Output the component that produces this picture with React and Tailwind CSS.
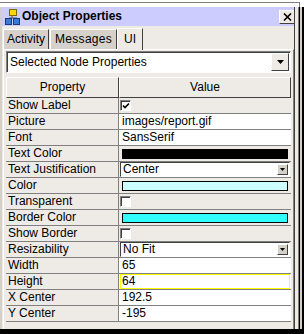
import React from "react";

const rows = [
  { p: "Show Label", t: "check", on: true },
  { p: "Picture", t: "text", v: "images/report.gif" },
  { p: "Font", t: "text", v: "SansSerif" },
  { p: "Text Color", t: "color", c: "bg-black" },
  { p: "Text Justification", t: "combo", v: "Center" },
  { p: "Color", t: "color", c: "bg-[#ccffff]" },
  { p: "Transparent", t: "check", on: false },
  { p: "Border Color", t: "color", c: "bg-[#33ffff]" },
  { p: "Show Border", t: "check", on: false },
  { p: "Resizability", t: "combo", v: "No Fit" },
  { p: "Width", t: "text", v: "65" },
  { p: "Height", t: "edit", v: "64" },
  { p: "X Center", t: "text", v: "192.5" },
  { p: "Y Center", t: "text", v: "-195" },
];

function SmallArrow() {
  return (
    <svg width="5" height="3" viewBox="0 0 5 3">
      <path d="M0 0H5L2.5 3Z" fill="#000" />
    </svg>
  );
}

function Value({ r }) {
  if (r.t === "check") {
    return (
      <div className="flex-1 bg-[#eeeae5] flex items-center pl-[1px]">
        <div className="w-[11px] h-[11px] bg-white border-t border-l border-[#808080] border-r border-b border-r-[#ffffff] border-b-[#ffffff] shadow-[inset_1px_1px_0_#404040] flex items-center justify-center">
          {r.on && (
            <svg width="8" height="8" viewBox="0 0 8 8">
              <path d="M1 3.5L3 5.5L7 1.5" stroke="#000" strokeWidth="1.6" fill="none" />
            </svg>
          )}
        </div>
      </div>
    );
  }
  if (r.t === "color") {
    return (
      <div className="flex-1 bg-[#eeeae5] flex items-center pl-[3px] pr-[3px]">
        <div className={`w-full h-[10px] border border-black ${r.c}`} />
      </div>
    );
  }
  if (r.t === "combo") {
    return (
      <div className="flex-1 bg-[#eeeae5] flex items-stretch pl-[1px] pr-[1px]">
        <div className="flex-1 bg-white border-t border-l border-[#404040] border-r border-b border-r-[#ffffff] border-b-[#ffffff] flex items-center pr-[1px]">
          <span className="flex-1 pl-[2px] leading-[13px]">{r.v}</span>
          <div className="w-[11px] h-[11px] bg-[#d4d0c8] border-t border-l border-white border-r border-b border-r-[#404040] border-b-[#404040] flex items-center justify-center">
            <SmallArrow />
          </div>
        </div>
      </div>
    );
  }
  if (r.t === "edit") {
    return (
      <div className="flex-1 bg-white flex items-stretch pl-[1px] pr-[1px]">
        <div className="flex-1 border border-[#ffff00] flex items-center pl-[1px]">{r.v}</div>
      </div>
    );
  }
  return <div className="flex-1 bg-white flex items-center pl-[3px]">{r.v}</div>;
}

export default function App() {
  return (
    <div className="w-[304px] h-[334px] bg-white overflow-hidden flex flex-col font-['Liberation_Sans',Arial,sans-serif] text-[12px] text-black leading-[15px]">
      <div className="h-[2px] bg-white" />
      <div className="h-[1px] w-[300px] bg-[#808080]" />
      <div className="h-[4px] w-[300px] bg-white border-r border-[#808080]" />
      <div className="flex flex-1 min-h-0">
        <div className="w-[294px] flex flex-col border-l-2 border-[#d4d0c8]">
          {/* title bar */}
          <div className="h-[19px] bg-[#ccccff] flex items-center pl-[3px] w-[296px]">
            <svg width="16" height="16" viewBox="0 0 16 16" className="shrink-0">
              <path d="M7 6V9M4 9H12M4 9V10M12 9V10" stroke="#555" strokeWidth="1" fill="none" />
              <rect x="4.5" y="0.5" width="7" height="6" fill="#f8d800" stroke="#7a6a00" />
              <rect x="0.5" y="9.5" width="6" height="6" fill="#3a7bd5" stroke="#1a3a7a" />
              <rect x="8.5" y="9.5" width="6" height="6" fill="#3a7bd5" stroke="#1a3a7a" />
            </svg>
            <span className="font-bold ml-[1px] flex-1 text-[12px]">Object Properties</span>
            <div className="w-[16px] h-[14px] bg-[#eeeae5] border-t border-l border-white border-r border-b border-r-[#404040] border-b-[#404040] flex items-center justify-center mr-[3px]">
              <svg width="9" height="8" viewBox="0 0 9 8">
                <path d="M1 0.5L8 7.5M8 0.5L1 7.5" stroke="#000" strokeWidth="1.6" />
              </svg>
            </div>
          </div>
          {/* body */}
          <div className="flex-1 bg-[#eeeae5] flex flex-col">
            <div className="h-[23px] flex items-end pl-[1px] pt-[1px]">
              <div className="h-[20px] bg-[#d6d2cb] border-t border-l border-white border-r border-r-[#404040] px-[3px] flex items-center mr-[1px]">Activity</div>
              <div className="h-[20px] bg-[#d6d2cb] border-t border-l border-white border-r border-r-[#404040] px-[4px] flex items-center tracking-[0.3px]">Messages</div>
              <div className="h-[22px] bg-[#eeeae5] border-t border-l border-white border-r border-r-[#404040] px-[6px] flex items-center -mb-[1px] relative z-10">UI</div>
            </div>
            <div className="flex-1 ml-[1px] border-t border-l border-white border-r border-r-[#808080] flex flex-col px-[1px] pt-[1px]">
              {/* combo */}
              <div className="h-[22px] mx-[1px] bg-white border-t border-l border-[#808080] border-r border-b border-r-white border-b-white shadow-[inset_1px_1px_0_#404040] flex items-center">
                <span className="flex-1 pl-[3px]">Selected Node Properties</span>
                <div className="w-[18px] h-[18px] mr-[1px] bg-[#eeeae5] border-t border-l border-white border-r border-b border-r-[#404040] border-b-[#404040] flex items-center justify-center">
                  <svg width="7" height="4" viewBox="0 0 7 4"><path d="M0 0H7L3.5 4Z" fill="#000" /></svg>
                </div>
              </div>
              {/* table */}
              <div className="mt-[4px] mx-[1px] flex flex-col">
                <div className="h-[21px] flex">
                  <div className="w-[113px] border-t border-l border-white border-r border-b border-r-[#404040] border-b-[#404040] flex items-center justify-center">Property</div>
                  <div className="flex-1 border-t border-l border-white border-r border-b border-r-[#404040] border-b-[#404040] flex items-center justify-center">Value</div>
                </div>
                {rows.map((r) => (
                  <div key={r.p} className="h-[16px] flex border-b border-[#808080]">
                    <div className="w-[113px] border-r border-[#808080] pl-[2px] flex items-center bg-[#eeeae5]">{r.p}</div>
                    <Value r={r} />
                  </div>
                ))}
              </div>
            </div>
          </div>
        </div>
        <div className="w-[1px] bg-[#404040]" />
        <div className="w-[3px] bg-[#eeeae5]" />
        <div className="w-[1px] bg-[#808080]" />
        <div className="w-[1px] bg-black" />
        <div className="w-[2px] bg-[#d4d0c8]" />
        <div className="w-[2px] bg-black" />
      </div>
      <div className="h-[5px] bg-black" />
    </div>
  );
}
